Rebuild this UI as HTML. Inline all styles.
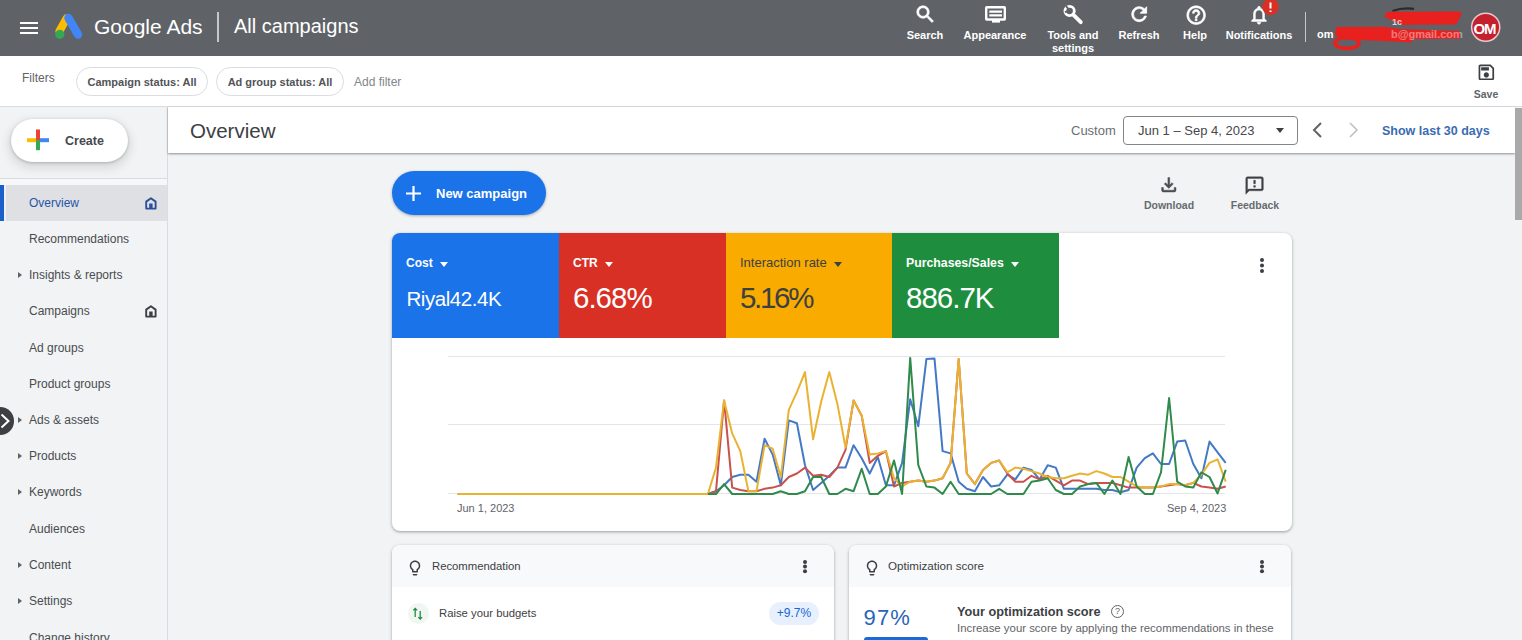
<!DOCTYPE html>
<html><head><meta charset="utf-8">
<style>
*{box-sizing:border-box;margin:0;padding:0}
html,body{width:1522px;height:640px;overflow:hidden;background:#f1f3f4;font-family:"Liberation Sans",sans-serif;color:#3c4043}
.a{position:absolute;white-space:nowrap}
#hdr{position:absolute;left:0;top:0;width:1522px;height:56px;background:#5f6368}
#fbar{position:absolute;left:0;top:56px;width:1522px;height:51px;background:#fff;border-bottom:1px solid #dadce0}
#side{position:absolute;left:0;top:107px;width:168px;height:533px;background:#f1f3f4;border-right:1px solid #dadce0}
#ovh{position:absolute;left:168px;top:107px;width:1347px;height:46px;background:#fff;box-shadow:0 1px 2px rgba(60,64,67,.55)}
.nav{position:absolute;left:29px;font-size:12px;line-height:14px;color:#494c50}
.tri{position:absolute;left:18px;width:0;height:0;border-top:3.5px solid transparent;border-bottom:3.5px solid transparent;border-left:4px solid #5f6368}
.card{position:absolute;background:#fff;border-radius:8px;box-shadow:0 1px 2px rgba(60,64,67,.3),0 1px 3px 1px rgba(60,64,67,.15);overflow:hidden}
.hl{position:absolute;color:#fff;font-size:11px;font-weight:bold;text-align:center;line-height:13px}
.chip{position:absolute;height:29px;border:1px solid #dadce0;border-radius:15px;font-size:11px;font-weight:bold;color:#515458;line-height:28.5px;text-align:center}
.tile{position:absolute;top:0;height:105px;width:167px}
.tl{position:absolute;left:14px;top:23px;font-size:12px;line-height:14px;font-weight:bold}
.tv{position:absolute;left:14px;top:50px;font-size:28px;line-height:32px}
.dd{display:inline-block;width:0;height:0;border-left:4.5px solid transparent;border-right:4.5px solid transparent;border-top:5px solid currentColor;vertical-align:middle;margin-left:7.5px;margin-top:-2px;position:relative;top:1.8px}
</style></head><body>
<div id="hdr">
  <div class="a" style="left:20px;top:21.5px;width:18px;height:2px;background:#fff"></div>
  <div class="a" style="left:20px;top:26.5px;width:18px;height:2px;background:#fff"></div>
  <div class="a" style="left:20px;top:31.5px;width:18px;height:2px;background:#fff"></div>
  <svg class="a" style="left:54px;top:13px" width="30" height="27" viewBox="0 0 30 27">
    <path d="M12.5 5.5 L5.5 18" stroke="#fbbc04" stroke-width="8" stroke-linecap="round"/>
    <path d="M14.5 5 L24 21.5" stroke="#4285f4" stroke-width="8.5" stroke-linecap="round"/>
    <circle cx="5.8" cy="21.3" r="4.6" fill="#34a853"/>
  </svg>
  <div class="a" style="left:94px;top:15px;font-size:21px;line-height:24px;color:#fff">Google Ads</div>
  <div class="a" style="left:217px;top:12px;width:1.5px;height:30px;background:#c5c7ca"></div>
  <div class="a" style="left:234px;top:15px;font-size:20px;line-height:23px;color:#fff">All campaigns</div>
  <!-- icons -->
  <svg class="a" style="left:914.2px;top:3.4px" width="22.8" height="22.8" viewBox="0 0 24 24"><path fill="#fff" stroke="#fff" stroke-width="0.7" d="M15.5 14h-.79l-.28-.27C15.41 12.59 16 11.11 16 9.5 16 5.91 13.09 3 9.5 3S3 5.91 3 9.5 5.91 16 9.5 16c1.61 0 3.09-.59 4.23-1.57l.27.28v.79l5 4.99L20.49 19l-4.99-5zm-6 0C7.01 14 5 11.99 5 9.5S7.01 5 9.5 5 14 7.01 14 9.5 11.99 14 9.5 14z"/></svg>
  <svg class="a" style="left:0;top:0" width="1522" height="55" viewBox="0 0 1522 55">
    <g fill="none" stroke="#fff" stroke-width="2">
      <rect x="986.2" y="7.3" width="18.6" height="12.2" rx="0.5" stroke-width="2.4"/>
      <path d="M989.3 11.6 H1002 M989.3 15.4 H1002" stroke-width="2.1"/>
    </g>
    <rect x="992" y="20" width="8" height="2.6" fill="#fff"/>
  </svg>
  <svg class="a" style="left:1060px;top:2px" width="26" height="26" viewBox="1060 2 26 26">
    <circle cx="1069.6" cy="11" r="4.7" fill="none" stroke="#fff" stroke-width="2.8"/>
    <path d="M1066 6.2 L1069.8 10.6 L1064.9 12.2" fill="none" stroke="#5f6368" stroke-width="1.8"/>
    <path d="M1073.2 14.6 L1080.8 22.2" stroke="#fff" stroke-width="3.8" stroke-linecap="round"/>
  </svg>
  <svg class="a" style="left:1128.4px;top:3.3px" width="22.4" height="22.4" viewBox="0 0 24 24"><path fill="#fff" stroke="#fff" stroke-width="0.8" d="M17.65 6.35C16.2 4.9 14.21 4 12 4c-4.42 0-7.99 3.58-7.99 8s3.57 8 7.99 8c3.73 0 6.84-2.55 7.73-6h-2.08c-.82 2.33-3.04 4-5.65 4-3.31 0-6-2.69-6-6s2.69-6 6-6c1.66 0 3.14.69 4.22 1.78L13 11h7V4l-2.35 2.35z"/></svg>
  <svg class="a" style="left:1184.9px;top:3.5px" width="22.3" height="22.3" viewBox="0 0 24 24"><path fill="#fff" stroke="#fff" stroke-width="0.7" d="M11 18h2v-2h-2v2zm1-16C6.48 2 2 6.48 2 12s4.48 10 10 10 10-4.48 10-10S17.52 2 12 2zm0 18c-4.41 0-8-3.59-8-8s3.59-8 8-8 8 3.59 8 8-3.59 8-8 8zm0-14c-2.21 0-4 1.79-4 4h2c0-1.1.9-2 2-2s2 .9 2 2c0 2-3 1.75-3 5h2c0-2.25 3-2.5 3-5 0-2.21-1.79-4-4-4z"/></svg>
  <svg class="a" style="left:1248px;top:3.6px" width="22" height="22" viewBox="0 0 24 24"><path fill="#fff" stroke="#fff" stroke-width="0.6" d="M12 22c1.1 0 2-.9 2-2h-4c0 1.1.9 2 2 2zm6-6v-5c0-3.07-1.63-5.64-4.5-6.32V4c0-.83-.67-1.5-1.5-1.5s-1.5.67-1.5 1.5v.68C7.64 5.36 6 7.92 6 11v5l-2 2v1h16v-1l-2-2zm-2 1H8v-6c0-2.48 1.51-4.5 4-4.5s4 2.02 4 4.5v6z"/></svg>
  <svg class="a" style="left:1260px;top:-3px" width="22" height="20" viewBox="0 0 22 20">
    <circle cx="10.5" cy="9.8" r="8.3" fill="#d93025"/>
    <path d="M10.5 5.5 V11.5 M10.5 13.5 V15" stroke="#fff" stroke-width="2"/>
  </svg>
  <div class="hl" style="left:895px;top:29px;width:60px">Search</div>
  <div class="hl" style="left:960px;top:29px;width:70px">Appearance</div>
  <div class="hl" style="left:1040px;top:29px;width:66px;line-height:13px">Tools and<br>settings</div>
  <div class="hl" style="left:1110px;top:29px;width:58px">Refresh</div>
  <div class="hl" style="left:1175px;top:29px;width:40px">Help</div>
  <div class="hl" style="left:1222px;top:29px;width:74px">Notifications</div>
  <div class="a" style="left:1304.5px;top:12px;width:1.5px;height:30px;background:#c5c7ca"></div>
  <div class="a" style="left:1317px;top:28px;font-size:11px;font-weight:bold;color:#fff;line-height:13px">om</div>
  
  <svg class="a" style="left:1300px;top:0" width="222" height="55" viewBox="1300 0 222 55">
    <path d="M1392.5 11 Q1402 7.5 1414 8.8" stroke="#2a2a2a" stroke-width="2.2" fill="none"/>
    <path d="M1389 11.8 L1459 11.5 Q1463 13 1461 15.5 L1456 24.5 L1403 25 L1384.5 17 Q1385 12.5 1389 11.8 Z" fill="#e8211f"/>
    <text x="1392" y="24.5" font-family="Liberation Sans" font-weight="bold" font-size="9" fill="#fff" opacity=".75">1c</text>
    <path d="M1336 27 L1385 26.8 L1400 29 L1460 31 L1460 38.5 L1412 39 L1412 42.5 L1362 40 Q1338 40 1335 34 Z" fill="#e8211f"/>
    <ellipse cx="1347" cy="43" rx="12" ry="5.5" fill="none" stroke="#e8211f" stroke-width="3.8"/>
    <text x="1391" y="38" font-family="Liberation Sans" font-weight="bold" font-size="11" fill="#fff" opacity=".4">b@gmail.com</text>
    <circle cx="1485.7" cy="27.2" r="14.8" fill="#e9c9cd"/>
    <circle cx="1485.7" cy="27.2" r="13.3" fill="#c4212f"/>
    <text x="1484.5" y="33.5" font-family="Liberation Sans" font-weight="bold" font-size="15" fill="#fff" text-anchor="middle" letter-spacing="-1.2">OM</text>
  </svg>
</div>
<div id="fbar">
  <div class="a" style="left:22px;top:15px;font-size:12px;line-height:14px;color:#5f6368">Filters</div>
  <div class="chip" style="left:76px;top:11px;width:132px">Campaign status: All</div>
  <div class="chip" style="left:216px;top:11px;width:128px">Ad group status: All</div>
  <div class="a" style="left:354px;top:19px;font-size:12px;line-height:14px;color:#80868b">Add filter</div>
  <svg class="a" style="left:1475.7px;top:5.8px" width="20.7" height="20.7" viewBox="0 0 24 24"><path fill="#3c4043" d="M17 3H5c-1.11 0-2 .9-2 2v14c0 1.1.89 2 2 2h14c1.1 0 2-.9 2-2V7l-4-4zm2 16H5V5h11.17L19 7.83V19zm-7-7c-1.66 0-3 1.34-3 3s1.34 3 3 3 3-1.34 3-3-1.34-3-3-3zM6 6h9v4H6z"/></svg>
  <div class="a" style="left:1470px;top:32px;width:32px;text-align:center;font-size:10.5px;line-height:13px;color:#62666a;font-weight:bold">Save</div>
</div>
<div id="side">
  <div class="a" style="left:11px;top:12px;width:117px;height:43px;background:#fff;border-radius:22px;box-shadow:0 1px 3px rgba(60,64,67,.3),0 4px 8px 3px rgba(60,64,67,.12)"></div>
  <svg class="a" style="left:26px;top:21px" width="24" height="24" viewBox="0 0 24 24">
    <rect x="1" y="10.2" width="10" height="4" fill="#fbbc04"/>
    <rect x="12" y="10.2" width="11" height="4" fill="#4285f4"/>
    <rect x="10" y="1.5" width="4" height="11" fill="#ea4335"/>
    <rect x="10" y="12.2" width="4" height="10" fill="#34a853"/>
  </svg>
  <div class="a" style="left:65px;top:27px;font-size:12.5px;line-height:15px;color:#46494d;font-weight:bold">Create</div>
  <div class="a" style="left:0;top:71px;width:167px;height:1px;background:#dadce0"></div>
  <div class="a" style="left:0;top:71.5px;width:167px;height:6px;background:#f6f7f8"></div>
  <div class="a" style="left:6px;top:78px;width:161px;height:36px;background:#dfe0e3"></div>
  <div class="a" style="left:4px;top:78px;width:2px;height:36px;background:#eef0f3"></div>
  <div class="a" style="left:0;top:78px;width:4px;height:36px;background:#1b5fc9"></div>
  <div class="nav" style="top:89px;color:#2356a8">Overview</div>
  <svg class="a" style="left:144.5px;top:89.8px" width="12" height="13" viewBox="0 0 12 13"><path d="M1.2 11.6 V4.6 L5.9 1.3 L10.6 4.6 V11.6 Z" fill="none" stroke="#2c4f9a" stroke-width="1.9" stroke-linejoin="round"/><rect x="4.2" y="6.5" width="3.4" height="5" fill="#2c4f9a"/></svg>
  <div class="nav" style="top:125px">Recommendations</div>
  <div class="tri" style="top:164.5px"></div><div class="nav" style="top:161px">Insights &amp; reports</div>
  <div class="nav" style="top:197px">Campaigns</div>
  <svg class="a" style="left:144.5px;top:197.8px" width="12" height="13" viewBox="0 0 12 13"><path d="M1.2 11.6 V4.6 L5.9 1.3 L10.6 4.6 V11.6 Z" fill="none" stroke="#3c4043" stroke-width="1.9" stroke-linejoin="round"/><rect x="4.2" y="6.5" width="3.4" height="5" fill="#3c4043"/></svg>
  <div class="nav" style="top:234px">Ad groups</div>
  <div class="nav" style="top:270px">Product groups</div>
  <div class="tri" style="top:309.5px"></div><div class="nav" style="top:306px">Ads &amp; assets</div>
  <div class="tri" style="top:345.5px"></div><div class="nav" style="top:342px">Products</div>
  <div class="tri" style="top:382px"></div><div class="nav" style="top:378px">Keywords</div>
  <div class="nav" style="top:415px">Audiences</div>
  <div class="tri" style="top:455px"></div><div class="nav" style="top:451px">Content</div>
  <div class="tri" style="top:491px"></div><div class="nav" style="top:487px">Settings</div>
  <div class="nav" style="top:524px">Change history</div>
  <div class="a" style="left:-14px;top:300px;width:27.5px;height:27.5px;border-radius:50%;background:#3c4043"></div>
  <svg class="a" style="left:0;top:305px" width="12" height="18" viewBox="0 0 12 18"><path d="M1.5 2.5 L8.5 9 L1.5 15.5" fill="none" stroke="#fff" stroke-width="2"/></svg>
</div>
<div id="ovh">
  <div class="a" style="left:22px;top:12px;font-size:20.5px;line-height:24px;color:#3c4043">Overview</div>
  <div class="a" style="left:903px;top:16.3px;font-size:13px;line-height:15px;color:#6a6e72">Custom</div>
  <div class="a" style="left:955px;top:9px;width:175px;height:29px;border:1px solid #80868b;border-radius:4px"></div>
  <div class="a" style="left:970px;top:16.3px;font-size:13px;line-height:15px;color:#45484c">Jun 1 – Sep 4, 2023</div>
  <div class="a" style="left:1108px;top:21px;width:0;height:0;border-left:4.5px solid transparent;border-right:4.5px solid transparent;border-top:5px solid #3c4043"></div>
  <svg class="a" style="left:1140px;top:14px" width="60" height="18" viewBox="0 0 60 18"><path d="M13 2 L6 9 L13 16" fill="none" stroke="#5f6368" stroke-width="2"/><path d="M42 2 L49 9 L42 16" fill="none" stroke="#bdc1c6" stroke-width="1.6"/></svg>
  <div class="a" style="left:1214px;top:17px;font-size:12.5px;line-height:15px;color:#3a6cb3;font-weight:bold">Show last 30 days</div>
</div>
<div class="a" style="left:1515px;top:108px;width:7px;height:112px;background:#a9a9a9"></div>

<div class="a" style="left:392px;top:171px;width:154px;height:44px;border-radius:22px;background:#1a73e8;box-shadow:0 1px 3px rgba(60,64,67,.4)"></div>
<svg class="a" style="left:405px;top:185px" width="17" height="17" viewBox="0 0 17 17"><path d="M8.5 1 V16 M1 8.5 H16" stroke="#fff" stroke-width="2.2"/></svg>
<div class="a" style="left:436px;top:186px;font-size:13px;line-height:15px;font-weight:bold;color:#fff">New campaign</div>
<svg class="a" style="left:1158.3px;top:174.2px" width="21.6" height="21.6" viewBox="0 0 24 24"><path fill="#4a4d51" stroke="#4a4d51" stroke-width="0.5" d="M18 15v3H6v-3H4v3c0 1.1.9 2 2 2h12c1.1 0 2-.9 2-2v-3h-2zm-1-4l-1.41-1.41L13 12.17V4h-2v8.17L8.41 9.59 7 11l5 5 5-5z"/></svg>
<svg class="a" style="left:1244.2px;top:174.5px" width="21.1" height="21.1" viewBox="0 0 24 24"><path fill="#3c4043" stroke="#3c4043" stroke-width="0.4" d="M20 2H4c-1.1 0-1.99.9-1.99 2L2 22l4-4h14c1.1 0 2-.9 2-2V4c0-1.1-.9-2-2-2zm0 14H5.17l-.59.59-.58.58V4h16v12zm-9-4h2v2h-2zm0-6h2v4h-2z"/></svg>
<div class="a" style="left:1134px;top:199px;width:70px;text-align:center;font-size:10.5px;line-height:13px;color:#676b6f;font-weight:bold">Download</div>
<div class="a" style="left:1220px;top:199px;width:70px;text-align:center;font-size:10.5px;line-height:13px;color:#676b6f;font-weight:bold">Feedback</div>

<div class="card" style="left:392px;top:233px;width:900px;height:297.6px">
  <div class="tile" style="left:0;background:#1a73e8;color:#fff"><div class="tl">Cost<span class="dd"></span></div><div class="tv" style="font-size:20.5px;top:53.6px;left:14.5px;line-height:24px;letter-spacing:-0.45px">Riyal42.4K</div></div>
  <div class="tile" style="left:167px;background:#d93025;color:#fff"><div class="tl">CTR<span class="dd"></span></div><div class="tv" style="font-size:29.5px;letter-spacing:-1px;top:49.3px">6.68%</div></div>
  <div class="tile" style="left:334px;background:#f9ab00;color:#3c4043"><div class="tl" style="font-weight:normal;font-size:13px">Interaction rate<span class="dd"></span></div><div class="tv" style="font-size:29.5px;letter-spacing:-2.3px;top:49.3px">5.16%</div></div>
  <div class="tile" style="left:500px;width:167px;background:#1e8e3e;color:#fff"><div class="tl" style="font-size:12.3px">Purchases/Sales<span class="dd"></span></div><div class="tv" style="font-size:29.5px;letter-spacing:-1px;top:49.3px">886.7K</div></div>
  <div class="a" style="left:867.7px;top:25.2px;width:4px;height:4px;border-radius:50%;background:#3c4043;box-shadow:0 5.5px 0 #3c4043,0 11px 0 #3c4043"></div>
  <div class="a" style="left:56px;top:122.7px;width:777px;height:1px;background:#e3e5e8"></div>
  <div class="a" style="left:56px;top:191.2px;width:777px;height:1px;background:#e3e5e8"></div>
  <div class="a" style="left:56px;top:260.4px;width:777px;height:1px;background:#e3e5e8"></div>
  <div class="a" style="left:65px;top:269.4px;font-size:11px;line-height:13px;color:#5f6368">Jun 1, 2023</div>
  <div class="a" style="left:775px;top:269.4px;font-size:11px;line-height:13px;color:#5f6368">Sep 4, 2023</div>
</div>
<svg class="a" style="left:0;top:0" width="1522" height="640" viewBox="0 0 1522 640">
<g fill="none" stroke-width="2" stroke-linejoin="round">
<polyline stroke="#4479c6" points="707.9,494.0 716.0,491.2 724.1,485.3 732.2,477.0 740.3,474.7 748.4,474.7 756.5,481.7 764.6,438.8 772.7,454.6 780.8,485.3 788.8,420.4 796.9,423.2 805.0,465.2 813.1,490.0 821.2,482.9 829.3,475.8 837.4,467.6 845.5,467.6 853.6,445.2 861.7,458.2 869.7,473.5 877.8,457.0 885.9,485.3 894.0,485.3 902.1,462.9 910.2,399.2 918.3,426.3 926.4,359.1 934.5,358.6 942.6,451.1 950.6,453.4 958.7,481.7 966.8,488.8 974.9,491.2 983.0,477.0 991.1,486.5 999.2,485.3 1007.3,474.7 1015.4,479.4 1023.5,467.6 1031.5,469.9 1039.6,479.4 1047.7,465.2 1055.8,467.6 1063.9,488.8 1072.0,488.8 1080.1,488.8 1088.2,488.8 1096.3,488.8 1104.4,490.0 1112.4,490.0 1120.5,492.3 1128.6,490.0 1136.7,467.6 1144.8,458.2 1152.9,453.4 1161.0,464.0 1169.1,464.0 1177.2,441.6 1185.2,440.5 1193.3,464.0 1201.4,478.2 1209.5,441.6 1217.6,452.3 1225.7,462.9"/>
<polyline stroke="#c9524c" points="707.9,494.0 716.0,491.2 724.1,400.4 732.2,487.6 740.3,490.0 748.4,491.2 756.5,491.2 764.6,488.8 772.7,487.6 780.8,485.3 788.8,477.0 796.9,473.5 805.0,467.6 813.1,475.8 821.2,474.7 829.3,477.0 837.4,467.6 845.5,449.9 853.6,400.4 861.7,415.7 869.7,462.9 877.8,455.8 885.9,451.1 894.0,486.5 902.1,482.9 910.2,481.7 918.3,480.6 926.4,481.7 934.5,480.6 942.6,478.2 950.6,462.9 958.7,359.1 966.8,473.5 974.9,484.1 983.0,469.9 991.1,462.9 999.2,460.5 1007.3,473.5 1015.4,481.7 1023.5,481.7 1031.5,475.8 1039.6,479.4 1047.7,475.8 1055.8,480.6 1063.9,485.3 1072.0,480.6 1080.1,480.6 1088.2,484.1 1096.3,482.9 1104.4,482.9 1112.4,482.9 1120.5,485.3 1128.6,487.6 1136.7,487.6 1144.8,487.6 1152.9,487.6 1161.0,486.5 1169.1,485.3 1177.2,484.1 1185.2,485.3 1193.3,482.9 1201.4,486.5 1209.5,487.6 1217.6,488.8 1225.7,486.5"/>
<polyline stroke="#eab232" points="457.2,494.0 465.2,494.0 473.3,494.0 481.4,494.0 489.5,494.0 497.6,494.0 505.7,494.0 513.8,494.0 521.9,494.0 530.0,494.0 538.1,494.0 546.1,494.0 554.2,494.0 562.3,494.0 570.4,494.0 578.5,494.0 586.6,494.0 594.7,494.0 602.8,494.0 610.9,494.0 619.0,494.0 627.0,494.0 635.1,494.0 643.2,494.0 651.3,494.0 659.4,494.0 667.5,494.0 675.6,494.0 683.7,494.0 691.8,494.0 699.9,494.0 707.9,494.0 716.0,467.6 724.1,400.4 732.2,433.4 740.3,451.1 748.4,491.2 756.5,491.2 764.6,445.2 772.7,448.7 780.8,477.0 788.8,409.8 796.9,392.1 805.0,372.1 813.1,439.3 821.2,401.5 829.3,372.1 837.4,403.9 845.5,447.5 853.6,400.4 861.7,415.7 869.7,454.6 877.8,453.4 885.9,451.1 894.0,478.2 902.1,486.5 910.2,481.7 918.3,480.6 926.4,481.7 934.5,480.6 942.6,478.2 950.6,462.9 958.7,359.1 966.8,473.5 974.9,484.1 983.0,469.9 991.1,462.9 999.2,460.5 1007.3,472.3 1015.4,467.6 1023.5,468.8 1031.5,471.1 1039.6,473.5 1047.7,477.0 1055.8,478.2 1063.9,478.2 1072.0,475.8 1080.1,473.5 1088.2,474.7 1096.3,471.1 1104.4,473.5 1112.4,477.0 1120.5,477.0 1128.6,481.7 1136.7,486.5 1144.8,487.6 1152.9,487.6 1161.0,486.5 1169.1,484.1 1177.2,484.1 1185.2,485.3 1193.3,482.9 1201.4,474.7 1209.5,462.9 1217.6,459.3 1225.7,481.7"/>
<polyline stroke="#2f8a4c" points="707.9,494.0 716.0,494.0 724.1,484.1 732.2,494.0 740.3,494.0 748.4,494.0 756.5,494.0 764.6,494.0 772.7,494.0 780.8,491.2 788.8,494.0 796.9,494.0 805.0,491.2 813.1,477.0 821.2,477.0 829.3,494.0 837.4,494.0 845.5,488.8 853.6,491.2 861.7,468.8 869.7,494.0 877.8,494.0 885.9,486.5 894.0,460.5 902.1,494.0 910.2,357.9 918.3,465.2 926.4,486.5 934.5,487.6 942.6,494.0 950.6,481.7 958.7,494.0 966.8,494.0 974.9,494.0 983.0,494.0 991.1,494.0 999.2,488.8 1007.3,494.0 1015.4,494.0 1023.5,494.0 1031.5,481.7 1039.6,480.6 1047.7,478.2 1055.8,490.0 1063.9,494.0 1072.0,494.0 1080.1,486.5 1088.2,484.1 1096.3,482.9 1104.4,494.0 1112.4,480.6 1120.5,494.0 1128.6,457.0 1136.7,486.5 1144.8,494.0 1152.9,494.0 1161.0,472.3 1169.1,398.0 1177.2,481.7 1185.2,486.5 1193.3,487.6 1201.4,472.3 1209.5,477.0 1217.6,493.5 1225.7,469.9"/>
</g></svg>

<div class="card" style="left:392px;top:545px;width:442px;height:120px">
  <div class="a" style="left:0;top:0;width:442px;height:42px;background:#f8f9fa"></div>
  <svg class="a" style="left:14px;top:13.5px" width="18" height="18" viewBox="0 0 24 24"><path fill="#3c4043" d="M9 21c0 .55.45 1 1 1h4c.55 0 1-.45 1-1v-1H9v1zm3-19C8.14 2 5 5.14 5 9c0 2.38 1.19 4.47 3 5.74V17c0 .55.45 1 1 1h6c.55 0 1-.45 1-1v-2.26c1.81-1.27 3-3.36 3-5.74 0-3.86-3.14-7-7-7zm2.85 11.1l-.85.6V16h-4v-2.3l-.85-.6C7.8 12.16 7 10.63 7 9c0-2.76 2.24-5 5-5s5 2.24 5 5c0 1.63-.8 3.16-2.15 4.1z"/></svg>
  <div class="a" style="left:40px;top:14px;font-size:11.3px;line-height:14px;color:#3c4043">Recommendation</div>
  <div class="a" style="left:411px;top:15.2px;width:4px;height:4px;border-radius:50%;background:#3c4043;box-shadow:0 4.6px 0 #3c4043,0 9.2px 0 #3c4043"></div>
  <div class="a" style="left:16px;top:58px;width:21px;height:21px;border-radius:50%;background:#f0f7f2"></div>
  <svg class="a" style="left:20px;top:61px" width="12" height="14" viewBox="0 0 12 14"><path d="M3.2 11 V2.5 M1.3 4.4 L3.2 2.5 L5.1 4.4" fill="none" stroke="#1e8e3e" stroke-width="1.3"/><path d="M8.2 5 V13 M6.3 11.1 L8.2 13 L10.1 11.1" fill="none" stroke="#1e8e3e" stroke-width="1.3"/></svg>
  <div class="a" style="left:47px;top:61px;font-size:11.3px;line-height:14px;color:#3c4043">Raise your budgets</div>
  <div class="a" style="left:377px;top:57px;width:50px;height:23px;border-radius:12px;background:#e8f0fe;color:#1967d2;font-size:12px;line-height:23px;text-align:center">+9.7%</div>
</div>
<div class="card" style="left:849px;top:545px;width:442px;height:120px">
  <div class="a" style="left:0;top:0;width:442px;height:42px;background:#f8f9fa"></div>
  <svg class="a" style="left:14px;top:13.5px" width="18" height="18" viewBox="0 0 24 24"><path fill="#3c4043" d="M9 21c0 .55.45 1 1 1h4c.55 0 1-.45 1-1v-1H9v1zm3-19C8.14 2 5 5.14 5 9c0 2.38 1.19 4.47 3 5.74V17c0 .55.45 1 1 1h6c.55 0 1-.45 1-1v-2.26c1.81-1.27 3-3.36 3-5.74 0-3.86-3.14-7-7-7zm2.85 11.1l-.85.6V16h-4v-2.3l-.85-.6C7.8 12.16 7 10.63 7 9c0-2.76 2.24-5 5-5s5 2.24 5 5c0 1.63-.8 3.16-2.15 4.1z"/></svg>
  <div class="a" style="left:39px;top:14px;font-size:11.6px;line-height:14px;color:#3c4043">Optimization score</div>
  <div class="a" style="left:411px;top:15.2px;width:4px;height:4px;border-radius:50%;background:#3c4043;box-shadow:0 4.6px 0 #3c4043,0 9.2px 0 #3c4043"></div>
  <div class="a" style="left:14.5px;top:60.3px;font-size:22px;line-height:26px;color:#2a64b8;letter-spacing:1.2px">97%</div>
  <div class="a" style="left:108px;top:59px;font-size:12.7px;line-height:15px;color:#3c4043;font-weight:bold;margin-top:0.6px">Your optimization score</div>
  <div class="a" style="left:262px;top:60px;width:13px;height:13px;border:1.3px solid #5f6368;border-radius:50%;font-size:9px;line-height:11px;text-align:center;color:#5f6368">?</div>
  <div class="a" style="left:108px;top:77px;font-size:11.4px;line-height:13px;color:#5f6368">Increase your score by applying the recommendations in these</div>
  <div class="a" style="left:15px;top:92px;width:64px;height:8px;background:#1a6ad8;border-radius:3px 3px 0 0"></div>
</div>
</body></html>
